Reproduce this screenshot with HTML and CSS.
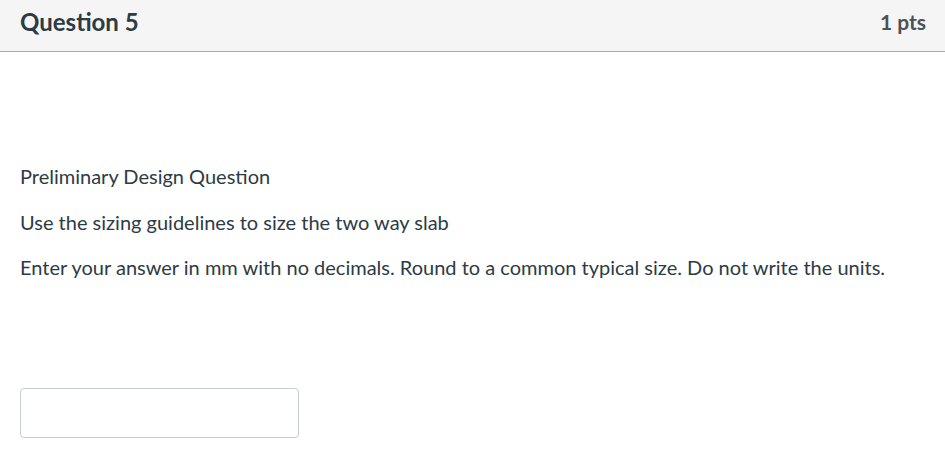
FILE: index.html
```html
<!DOCTYPE html>
<html>
<head>
<meta charset="utf-8">
<link rel="stylesheet" href="styles.css">
</head>
<body>
<div class="question">
  <div class="header">
    <span class="title">Question 5</span>
    <span class="pts">1 pts</span>
  </div>
  <div class="content">
    <p>Preliminary Design Question</p>
    <p>Use the sizing guidelines to size the two way slab</p>
    <p>Enter your answer in mm with no decimals. Round to a common typical size. Do not write the units.</p>
  </div>
  <div class="answer">
    <input class="answer-input" type="text">
  </div>
</div>
</body>
</html>
```
FILE: styles.css
```css
html, body {
  margin: 0;
  padding: 0;
  background: #fff;
  font-family: Lato, "Liberation Sans", sans-serif;
  color: #2d3b45;
}
.question {
  width: 945px;
}
.header {
  display: flex;
  justify-content: space-between;
  align-items: center;
  height: 51px;
  padding: 0 19px 0 20px;
  background: #f5f5f5;
  border-bottom: 1px solid #aaa;
  box-sizing: content-box;
}
.title {
  font-size: 24px;
  font-weight: bold;
  margin-top: -9px;
}
.pts {
  font-size: 21px;
  font-weight: bold;
  color: #4a525a;
  margin-top: -9px;
}
.content {
  padding: 112px 20px 0 20px;
}
.content p {
  margin: 0 0 21.5px 0;
  font-size: 20px;
  line-height: 24px;
}
.answer {
  padding: 87px 20px 0 20px;
}
.answer-input {
  display: block;
  width: 279px;
  height: 50px;
  box-sizing: border-box;
  border: 1px solid #c7cdd1;
  border-radius: 4px;
  background: #fff;
  margin: 0;
  padding: 0 10px;
  outline: none;
}
```
